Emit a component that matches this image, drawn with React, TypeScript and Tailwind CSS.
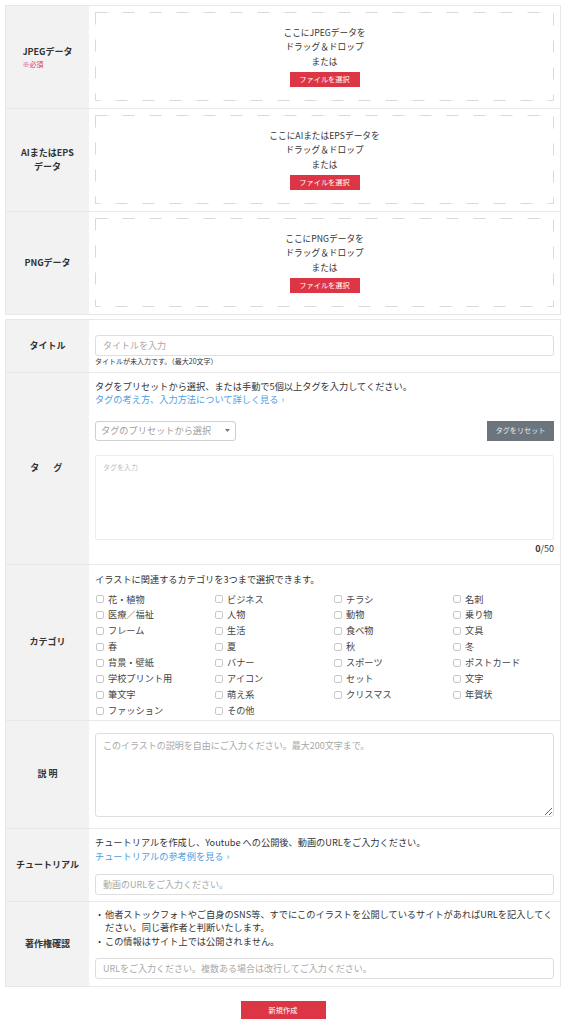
import clsx from 'clsx';

const UPLOADS = [
  { label: 'JPEGデータ', kind: 'JPEG', required: true },
  { label: 'AIまたはEPS\nデータ', kind: 'AIまたはEPS', required: false },
  { label: 'PNGデータ', kind: 'PNG', required: false },
];

const CATEGORIES = [
  '花・植物', 'ビジネス', 'チラシ', '名刺',
  '医療／福祉', '人物', '動物', '乗り物',
  'フレーム', '生活', '食べ物', '文具',
  '春', '夏', '秋', '冬',
  '背景・壁紙', 'バナー', 'スポーツ', 'ポストカード',
  '学校プリント用', 'アイコン', 'セット', '文字',
  '筆文字', '萌え系', 'クリスマス', '年賀状',
  'ファッション', 'その他',
];

const DropZone = ({ kind }: { kind: string }) => (
  <div className="relative flex h-[89px] flex-col items-center justify-center text-[8.7px] leading-[14.5px] text-[#333]">
    <svg className="pointer-events-none absolute inset-0 h-full w-full" aria-hidden="true">
      <rect
        x="0.5"
        y="0.5"
        className="h-[calc(100%-1px)] w-[calc(100%-1px)]"
        fill="none"
        stroke="#d9d9d9"
        strokeWidth="1"
        strokeDasharray="12 15"
      />
    </svg>
    <p>ここに{kind}データを</p>
    <p>ドラッグ＆ドロップ</p>
    <p>または</p>
    <button className="mt-[3px] h-[15px] w-[70px] bg-[#dc3545] text-[7.2px] leading-[15px] text-white">
      ファイルを選択
    </button>
  </div>
);

const Label = ({ children }: { children: React.ReactNode }) => (
  <div className="flex items-center justify-center bg-[#f2f2f2] text-center text-[9px] font-bold leading-[14px] text-[#333]">
    {children}
  </div>
);

const TextInput = ({ placeholder }: { placeholder: string }) => (
  <input
    placeholder={placeholder}
    className="block h-[21px] w-full rounded-[3px] border border-[#dedede] bg-white px-[7px] text-[9px] outline-none placeholder:text-[#a8a8a8]"
  />
);

const Chevron = () => <span className="ml-[3px] inline-block text-[9px]">›</span>;

export default function App() {
  return (
    <div className="min-h-screen bg-white px-[5px] pb-[8px] pt-[5px] font-['Noto_Sans_CJK_JP',sans-serif] text-[#333]">
      {/* file uploads */}
      <div className="border border-[#e8e8e8]">
        {UPLOADS.map((u, i) => (
          <div key={u.kind} className={clsx('grid grid-cols-[83px_1fr]', i > 0 && 'border-t border-[#e8e8e8]')}>
            <Label>
              <div className="inline-block text-left">
                {u.label.split('\n').map((l) => (
                  <div key={l} className="text-center">
                    {l}
                  </div>
                ))}
                {u.required && <div className="text-[7px] font-normal leading-[10px] text-[#e0364a]">※必須</div>}
              </div>
            </Label>
            <div className="px-[6px] pb-[7px] pt-[6px]">
              <DropZone kind={u.kind} />
            </div>
          </div>
        ))}
      </div>

      {/* form */}
      <div className="mt-[4px] border border-[#e8e8e8] text-[9.2px]">
        <div className="grid grid-cols-[83px_1fr]">
          <Label>タイトル</Label>
          <div className="px-[6px] pb-[6px] pt-[15px]">
            <TextInput placeholder="タイトルを入力" />
            <p className="mt-[1px] text-[7px] leading-[9px]">タイトルが未入力です。（最大20文字）</p>
          </div>
        </div>

        <div className="grid grid-cols-[83px_1fr] border-t border-[#e8e8e8]">
          <Label>
            <span className="tracking-[2.5px]">タ　グ</span>
          </Label>
          <div className="px-[6px] pb-[10px] pt-[6px]">
            <p className="leading-[14px]">タグをプリセットから選択、または手動で5個以上タグを入力してください。</p>
            <p className="leading-[13.5px] text-[#4a9ee6]">
              タグの考え方、入力方法について詳しく見る
              <Chevron />
            </p>
            <div className="mt-[14px] flex items-center justify-between">
              <div className="flex h-[20px] w-[141px] items-center justify-between rounded-[3px] border border-[#cfcfcf] px-[5px] text-[9.2px] text-[#a0a0a0]">
                <span>タグのプリセットから選択</span>
                <svg width="5" height="3" viewBox="0 0 5 3" aria-hidden="true">
                  <path d="M0 0h5L2.5 3z" fill="#777" />
                </svg>
              </div>
              <button className="h-[20px] w-[67px] bg-[#6c757d] text-[7.1px] text-[#e8e8e8]">タグをリセット</button>
            </div>
            <textarea
              placeholder="タグを入力"
              className="mt-[14px] block h-[85px] w-full resize-none rounded-[2px] border border-[#ececec] px-[7px] py-[6px] text-[7px] outline-none placeholder:text-[#bdbdbd]"
            />
            <p className="mt-[3px] text-right text-[9px] leading-[11px]">
              <b>0</b>/50
            </p>
          </div>
        </div>

        <div className="grid grid-cols-[83px_1fr] border-t border-[#e8e8e8]">
          <Label>カテゴリ</Label>
          <div className="px-[6px] pb-[1px] pt-[7px]">
            <p className="leading-[14px]">イラストに関連するカテゴリを3つまで選択できます。</p>
            <div className="mt-[6px] grid grid-cols-[119px_119px_119px_1fr]">
              {CATEGORIES.map((c) => (
                <label key={c} className="flex h-[15.9px] items-center">
                  <span className="ml-[1px] h-[8px] w-[8px] rounded-[2px] border border-[#c9c9c9] bg-white" />
                  <span className="ml-[4px] text-[#444]">{c}</span>
                </label>
              ))}
            </div>
          </div>
        </div>

        <div className="grid grid-cols-[83px_1fr] border-t border-[#e8e8e8]">
          <Label>説 明</Label>
          <div className="px-[6px] pb-[11px] pt-[12px]">
            <textarea
              placeholder="このイラストの説明を自由にご入力ください。最大200文字まで。"
              className="block h-[84px] w-full rounded-[3px] border border-[#dedede] px-[7px] py-[5px] text-[9px] outline-none placeholder:text-[#a8a8a8]"
            />
          </div>
        </div>

        <div className="grid grid-cols-[83px_1fr] border-t border-[#e8e8e8]">
          <Label>チュートリアル</Label>
          <div className="px-[6px] pb-[6px] pt-[6px]">
            <p className="leading-[14px]">チュートリアルを作成し、Youtube への公開後、動画のURLをご入力ください。</p>
            <p className="leading-[14px] text-[#4a9ee6]">
              チュートリアルの参考例を見る
              <Chevron />
            </p>
            <div className="mt-[10px]">
              <TextInput placeholder="動画のURLをご入力ください。" />
            </div>
          </div>
        </div>

        <div className="grid grid-cols-[83px_1fr] border-t border-[#e8e8e8]">
          <Label>著作権確認</Label>
          <div className="px-[6px] pb-[7px] pt-[6px]">
            <ul className="leading-[13.5px]">
              <li className="flex">
                <span className="w-[10px] shrink-0">・</span>
                <span>
                  <span className="whitespace-nowrap">
                    他者ストックフォトやご自身のSNS等、すでにこのイラストを公開しているサイトがあればURLを記入してく
                  </span>
                  <br />
                  ださい。同じ著作者と判断いたします。
                </span>
              </li>
              <li className="flex">
                <span className="w-[10px] shrink-0">・</span>
                <span>この情報はサイト上では公開されません。</span>
              </li>
            </ul>
            <div className="mt-[10px]">
              <TextInput placeholder="URLをご入力ください。複数ある場合は改行してご入力ください。" />
            </div>
          </div>
        </div>
      </div>

      <div className="mt-[14px] flex justify-center">
        <button className="h-[18px] w-[85px] bg-[#dc3545] text-[7.2px] text-white">新規作成</button>
      </div>
    </div>
  );
}
